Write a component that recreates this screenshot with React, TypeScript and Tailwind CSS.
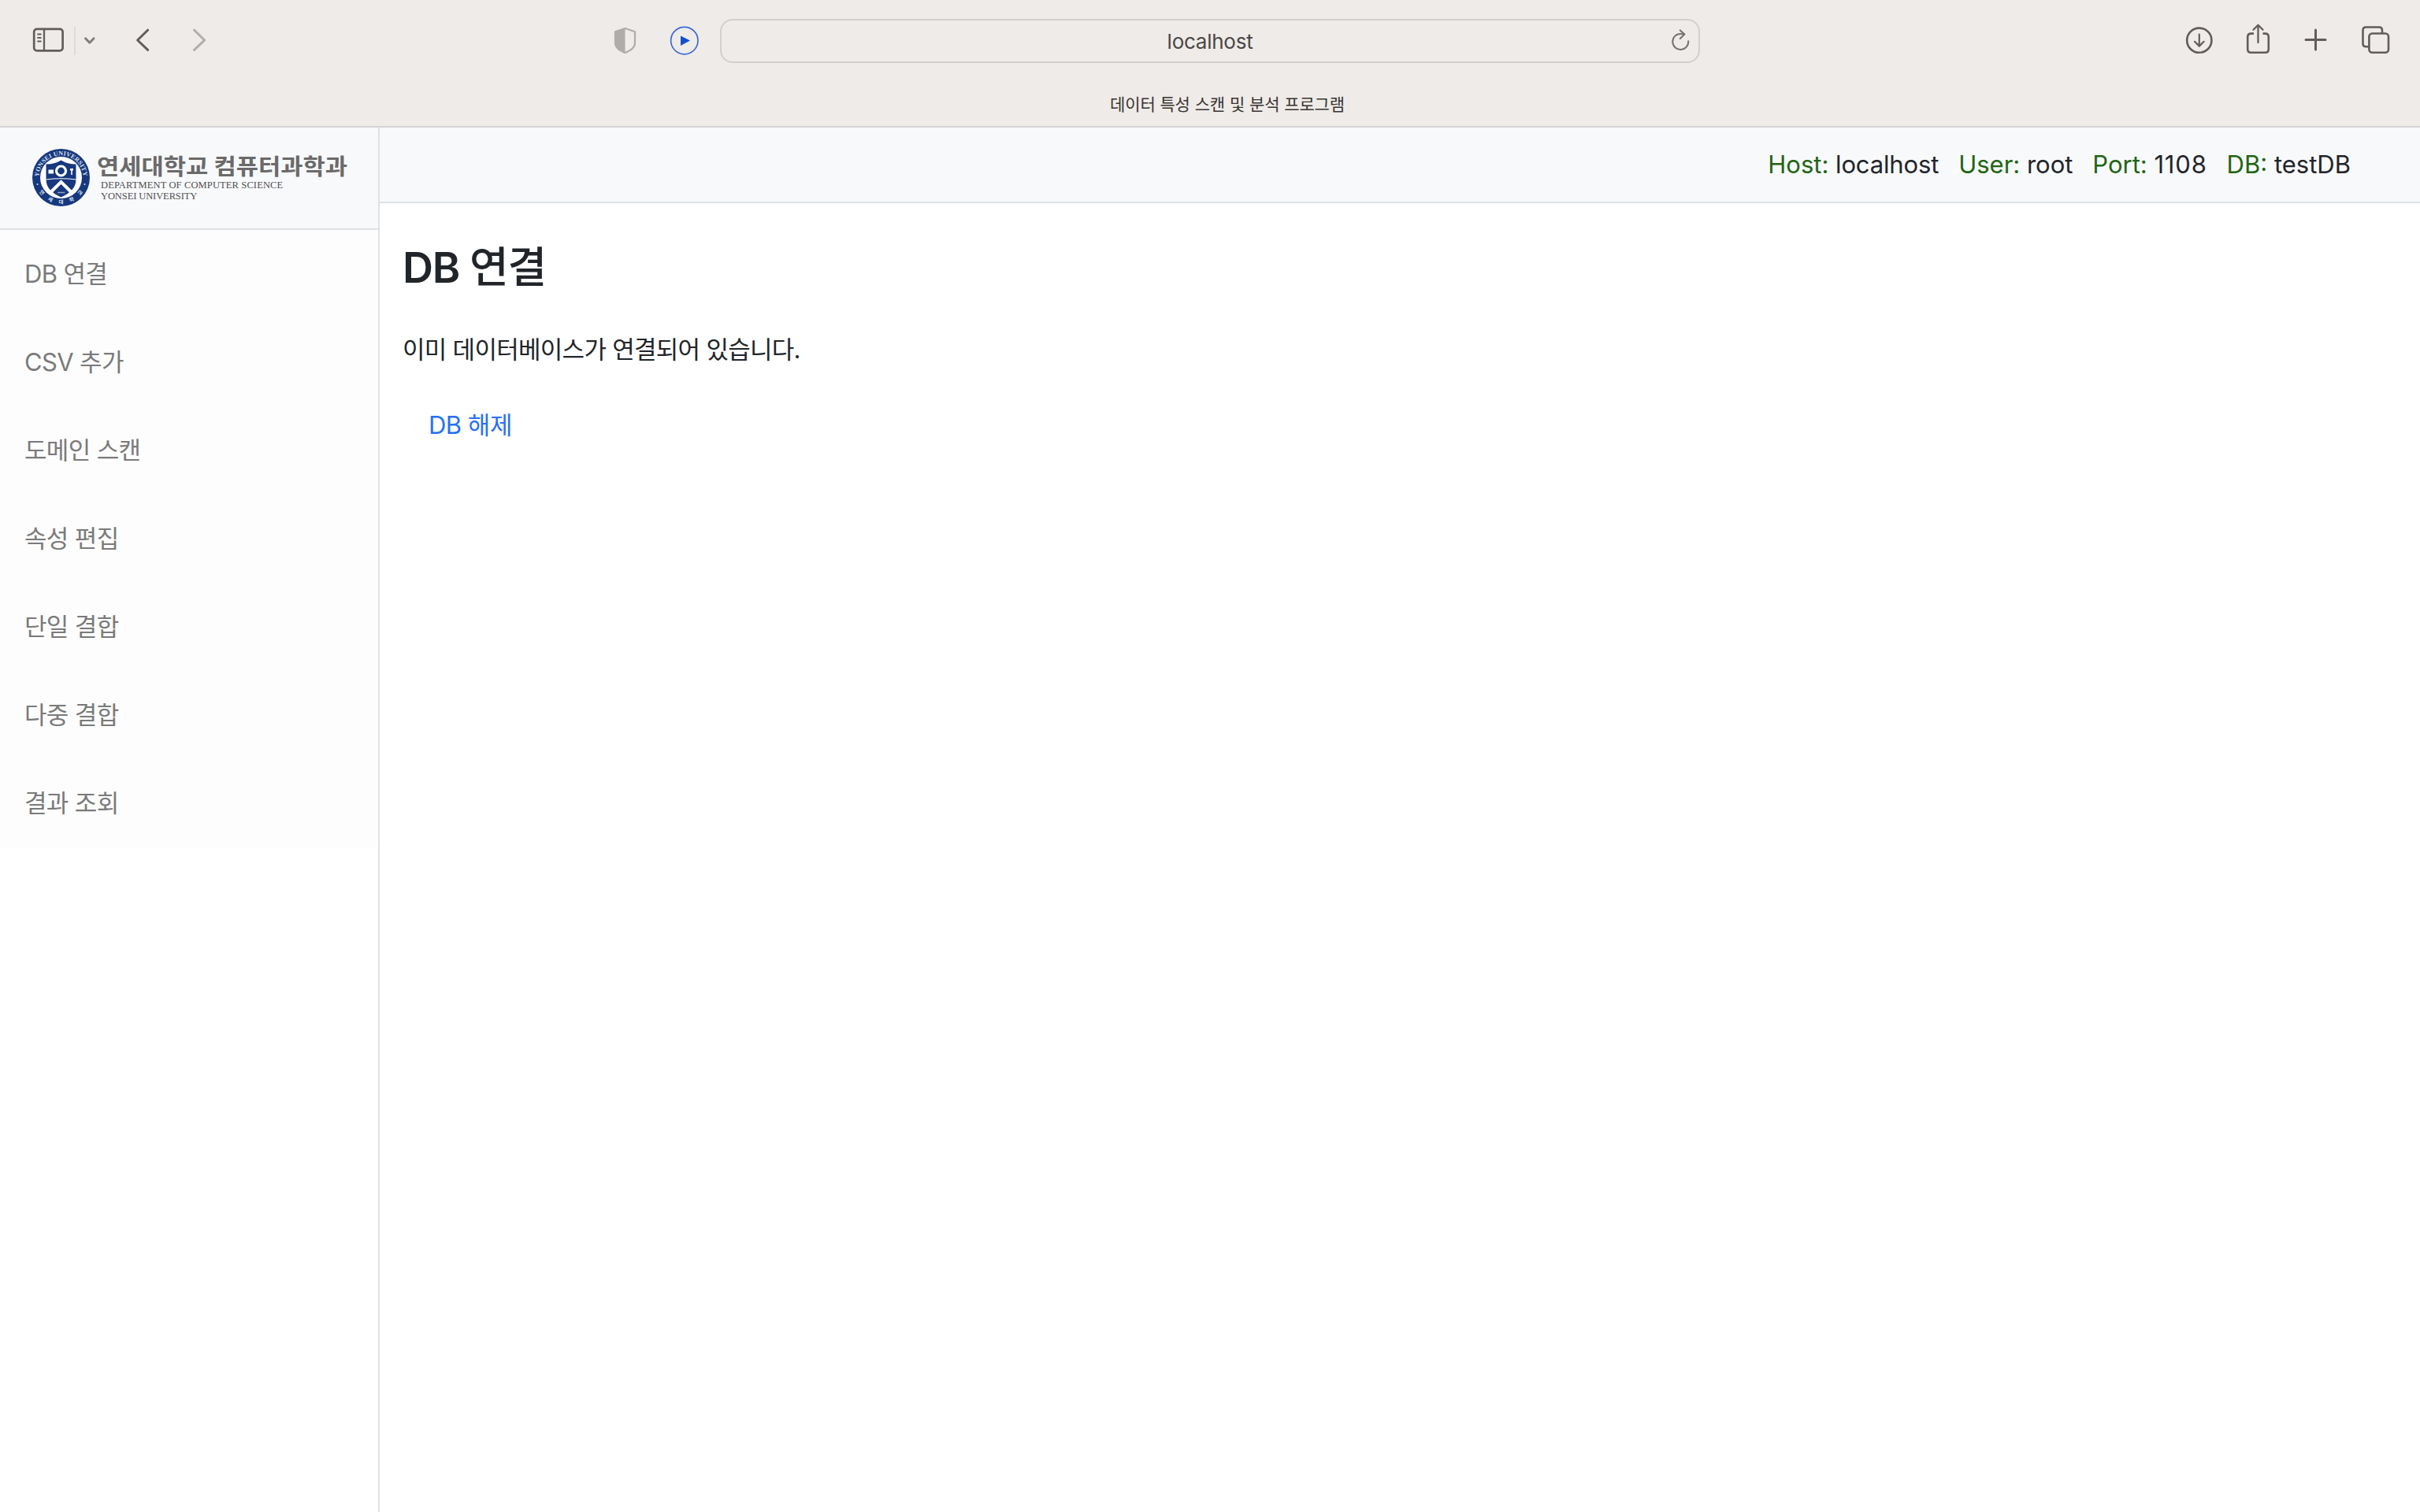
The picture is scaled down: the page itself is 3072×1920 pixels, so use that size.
import React from "react";

const stroke = { fill: "none", strokeLinecap: "round", strokeLinejoin: "round" } as const;

function Chrome() {
  return (
    <header className="flex h-[162px] flex-col border-b-2 border-[#d4d4d5] bg-[#efebe8] text-[#625d5a]">
      <div className="flex h-[104px] items-center">
        <svg className="h-[104px] w-[300px]" viewBox="0 0 300 104" {...stroke} stroke="currentColor">
          <rect x="43.2" y="36.8" width="36.4" height="27.6" rx="3.6" strokeWidth="2.7" />
          <path d="M56 37v27" strokeWidth="2.3" />
          <path d="M48 43.5h3.8M48 48h3.8M48 52.5h3.8" strokeWidth="1.8" />
          <path d="M95 34v36" stroke="#dfdbd8" strokeWidth="2" strokeLinecap="butt" />
          <path d="M108.5 48.7l5.3 5.6 5.3-5.6" stroke="#7f7b79" strokeWidth="2.8" />
          <path d="M187.6 38.2L174.6 51l13 12.4" strokeWidth="3" />
          <path d="M246.6 38.2L259.6 51l-13 12.4" stroke="#b2aeac" strokeWidth="3" />
        </svg>
        <svg className="ml-[460px] h-[104px] w-[154px]" viewBox="0 0 154 104" {...stroke}>
          <path d="M33.5 36L46 40.3V54.5c0 6.5-6 9.5-12.5 12.5C27 64 21 61 21 54.5V40.3z" stroke="#b0aca9" strokeWidth="2.2" />
          <path d="M33.5 36L21 40.3V54.5C21 61 27 64 33.5 67z" fill="#b0aca9" />
          <circle cx="108.8" cy="51.6" r="17.2" stroke="#3c6ad4" strokeWidth="1.7" />
          <path d="M104 45.5L116 51.6 104 58z" fill="#1650cc" />
        </svg>
        <div className="flex h-14 w-[1244px] items-center rounded-2xl border-2 border-[#d3cfcc]">
          <div className="w-[54px]" />
          <div className="flex-1 text-center text-[26px] tracking-[-0.25px] text-[#4a4745]">localhost</div>
          <svg className="h-[52px] w-[54px]" viewBox="0 0 54 52" {...stroke} stroke="#76726f" strokeWidth="2">
            <path d="M41.2 26.2A10 10 0 1 1 31.3 16.9Q34 16.9 36.3 17.5" />
            <path d="M30.8 12.4l5.5 5.1-5.5 5.5" />
          </svg>
        </div>
        <svg className="ml-auto h-[104px] w-[332px]" viewBox="0 0 332 104" {...stroke} stroke="currentColor" strokeWidth="2.6">
          <circle cx="51.8" cy="51.2" r="15.6" />
          <path d="M51.8 43.5v15M46 52.8l5.8 5.8 5.8-5.8" strokeWidth="2.2" />
          <path d="M121 42.6h-3.5q-4.3 0-4.3 4.3V62.4q0 4.3 4.3 4.3h18q4.3 0 4.3-4.3V46.9q0-4.3-4.3-4.3H132.5" strokeLinecap="butt" />
          <path d="M126.5 54V32.5M120.5 37.8l6-6 6 6" strokeWidth="2.3" />
          <path d="M199.5 38v25M187 50.5h25" strokeWidth="3" />
          <rect x="267.4" y="42.5" width="24.6" height="24.2" rx="4" />
          <path d="M267 59.3h-3.5q-4 0-4-4V38.5q0-4 4-4h16.5q4 0 4 4V42" strokeLinecap="butt" />
        </svg>
      </div>
      <div className="pl-[44px] pt-[15px] text-center text-[21px] leading-[28px] tracking-[-0.1px] text-[#383431]">데이터 특성 스캔 및 분석 프로그램</div>
    </header>
  );
}

function Emblem() {
  return (
    <svg className="ml-[41px] h-[74px] w-[74px] shrink-0" viewBox="0 0 74 74">
      <defs>
        <path id="ringTop" d="M8.3 36.5a28.2 28.2 0 0 1 56.4 0" />
        <path id="ringBottom" d="M3.3 36.5a33.2 33.2 0 0 0 66.4 0" />
      </defs>
      <circle cx="36.5" cy="36.5" r="36.5" fill="#17387e" />
      <circle cx="36.5" cy="36.5" r="26.5" fill="#fff" />
      <text fill="#dbe2f0" fontSize="8" fontFamily="Liberation Serif" fontWeight="700">
        <textPath href="#ringTop" startOffset="1" textLength="86">YONSEI UNIVERSITY</textPath>
      </text>
      <text fill="#dbe2f0" fontSize="6.5" fontFamily="Noto Sans CJK KR" fontWeight="700">
        <textPath href="#ringBottom" startOffset="19" textLength="66">연세대학교</textPath>
      </text>
      <circle cx="6.5" cy="45" r="1" fill="#dbe2f0" />
      <circle cx="66.5" cy="45" r="1" fill="#dbe2f0" />
      <path d="M17.5 19.5q11 0 19-5 8 5 19 5V39q0 14-19 22.5Q17.5 53 17.5 39z" fill="#17387e" />
      <path d="M17.5 39q19-2.5 38 0" stroke="#fff" strokeWidth="1.2" fill="none" />
      <circle cx="36.5" cy="28" r="6" stroke="#fff" strokeWidth="3.2" fill="none" />
      <path d="M20.5 26.5h6.5v5h-6.5z M48 25h4v2.5h-1.2V33h-1.6v-5.5H48z" fill="#fff" />
      <path d="M24 54.5l12.5-12.5L49 54.5" stroke="#fff" strokeWidth="4" fill="none" />
      <path d="M32 55.5h9.5" stroke="#8fa0c6" strokeWidth="1.5" />
    </svg>
  );
}

const menu = ["DB 연결", "CSV 추가", "도메인 스캔", "속성 편집", "단일 결합", "다중 결합", "결과 조회"];

const status = [
  { label: "Host:", value: "localhost", tracking: "tracking-[-0.15px]" },
  { label: "User:", value: "root", tracking: "tracking-[-0.05px]" },
  { label: "Port:", value: "1108", tracking: "tracking-[0.8px]" },
  { label: "DB:", value: "testDB", tracking: "tracking-normal" },
];

export default function App() {
  return (
    <div className="flex h-[1920px] w-[3072px] flex-col overflow-hidden bg-white font-['Inter','Noto_Sans_CJK_KR',sans-serif] text-[#212529]">
      <Chrome />
      <div className="flex flex-1">
        <aside className="w-[482px] border-r-2 border-[#dee2e6]">
          <div className="flex h-[130px] items-center border-b-2 border-[#dee2e6] bg-[#f8f9fb]">
            <Emblem />
            <div className="ml-[8px] whitespace-nowrap">
              <div className="origin-left scale-x-[1.097] text-[28px] font-bold leading-[32px] text-[#6a6a6a]">연세대학교 컴퓨터과학과</div>
              <div className="ml-[5px] font-['Liberation_Serif',serif] text-[12.5px] leading-[14px] text-[#505050]">
                <div className="tracking-[0.13px]">DEPARTMENT OF COMPUTER SCIENCE</div>
                <div className="tracking-[-0.1px]">YONSEI UNIVERSITY</div>
              </div>
            </div>
          </div>
          <nav className="bg-[#fdfdfd]">
            {menu.map((m) => (
              <a key={m} className="flex h-[112px] items-center pl-[31px] pt-px text-[31px] tracking-[-0.65px] text-[#7a7a7a]">{m}</a>
            ))}
          </nav>
        </aside>
        <main className="flex-1">
          <div className="flex h-[96px] items-center justify-end gap-[25px] border-b-2 border-[#dee2e6] bg-[#f8f9fb] pr-[88px] text-[31px]">
            {status.map((s) => (
              <span key={s.label}>
                <span className="text-[#1f6512]">{s.label}</span> <span className={s.tracking}>{s.value}</span>
              </span>
            ))}
          </div>
          <div className="pl-[29px]">
            <h1 className="pt-[48px] text-[54px] font-medium leading-[68px] tracking-[-1.3px]">
              <span className="font-semibold">DB</span> 연결
            </h1>
            <p className="pt-[46px] text-[31px] leading-[48px] tracking-[-0.72px]">이미 데이터베이스가 연결되어 있습니다.</p>
            <a className="block pl-[33px] pt-[48px] text-[31px] leading-[48px] tracking-[-0.5px] text-[#2670f6]">DB 해제</a>
          </div>
        </main>
      </div>
    </div>
  );
}
